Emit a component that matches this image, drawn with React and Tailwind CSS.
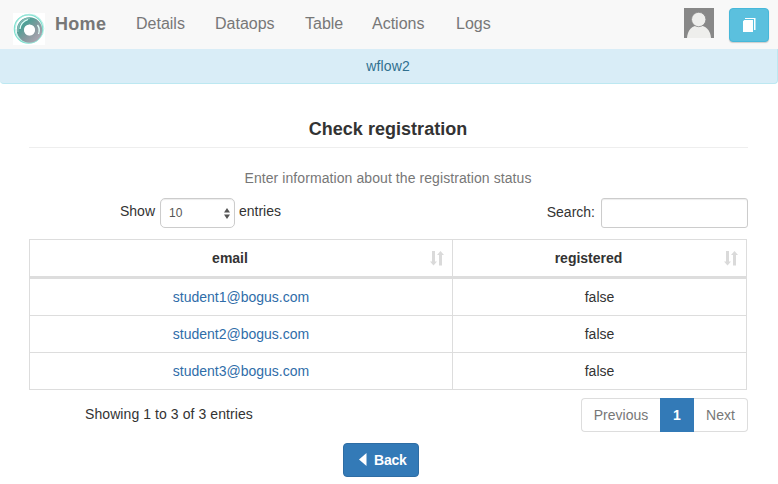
const links = [
  { label: "Details", cls: "w-[79px]" },
  { label: "Dataops", cls: "w-[90px]" },
  { label: "Table", cls: "w-[67px]" },
  { label: "Actions", cls: "w-[84px]" },
  { label: "Logs", cls: "w-[50px]" },
];

const rows = [
  { email: "student1@bogus.com", registered: "false" },
  { email: "student2@bogus.com", registered: "false" },
  { email: "student3@bogus.com", registered: "false" },
];

function Logo() {
  return (
    <svg width="32" height="32" viewBox="0 0 32 32" fill="none">
      <defs>
        <linearGradient id="ring" x1="0" y1="0" x2="1" y2="1">
          <stop offset=".2" stopColor="#4fa096" />
          <stop offset=".6" stopColor="#85999e" />
          <stop offset="1" stopColor="#a9a5b0" />
        </linearGradient>
      </defs>
      <rect width="32" height="32" fill="#fff" />
      <circle cx="15.500" cy="16" r="14.200" stroke="#7fe0cf" strokeWidth="1.200" />
      <circle cx="16.500" cy="15.500" r="14.300" stroke="#a5eadf" strokeWidth=".7" />
      <circle cx="16.500" cy="17" r="9" fill="#fff" stroke="url(#ring)" strokeWidth="7.400" />
      <path d="M5 19C4 12 9 5 17 5.500" stroke="#84b8b3" strokeWidth="1.500" />
      <path d="M7 16c.5-5 3.500-8 8-9.500M25.500 21c1.500-4 .5-7-1-9" stroke="#e2fff9" strokeWidth="1.300" />
      <circle cx="16.500" cy="17" r="5.500" fill="#fff" />
    </svg>
  );
}

function Avatar() {
  return (
    <svg width="30" height="30" viewBox="0 0 30 30">
      <rect width="30" height="30" fill="#888" />
      <path d="M3 30C3.500 22 8 17.500 14.800 17.500S26.500 22 27 30Z" fill="#eeeeec" />
      <circle cx="14.700" cy="11.500" r="7.200" fill="#eeeeec" stroke="#888" strokeWidth=".8" />
    </svg>
  );
}

function SortIcon() {
  return (
    <svg className="shrink-0" width="14" height="15" viewBox="0 0 14 15" fill="#dadada">
      <path d="M2 0h3v10.500h2L3.500 14.500 0 10.500h2z" />
      <path d="M9 14.500h3V4h2L10.500 0 7 4h2z" />
    </svg>
  );
}

function HeadCell({ label, className }) {
  return (
    <div className={"flex items-center pr-[8px] " + className}>
      <span className="flex-1 text-center font-bold">{label}</span>
      <SortIcon />
    </div>
  );
}

export default function App() {
  return (
    <div className="h-[484px] w-[778px] overflow-hidden bg-white font-['Liberation_Sans',Arial,sans-serif] text-[14px] leading-[20px] whitespace-nowrap text-[#333]">
      <nav className="flex h-[49px] items-start bg-[#f8f8f8] pl-[13px] text-[16px] text-[#777]">
        <div className="mt-[13px] w-[42px]"><Logo /></div>
        <a className="mt-[14px] w-[81px] text-[18px] font-bold tracking-[0.3px]">Home</a>
        {links.map((l) => (
          <a key={l.label} className={"mt-[14px] " + l.cls}>{l.label}</a>
        ))}
        <div className="mt-[8px] ml-auto flex pr-[9px]">
          <Avatar />
          <button className="ml-[15px] flex h-[34px] w-[40px] items-center justify-center rounded border border-[#46b8da] bg-[#5bc0de] shadow-[0_1px_1px_#ccc]">
            <svg width="14" height="14" viewBox="0 0 14 14" fill="#fff">
              <path d="M1 3.300 2.300 2H11v12H1z" />
              <path d="M3 0h10.500v12H12V1H3z" />
            </svg>
          </button>
        </div>
      </nav>
      <div className="flex h-[35px] items-center justify-center rounded-b border-r border-b border-[#bce8f1] bg-[#d9edf7] pr-[1px] tracking-[0.15px] text-[#31708f]">wflow2</div>

      <main className="pr-[30px] pl-[29px]">
        <h1 className="flex h-[64px] items-end justify-center border-b border-[#eee] pr-[1px] pb-[8px] text-[18px] font-bold tracking-[0.03px]">Check registration</h1>
        <p className="mt-[20px] pr-[1px] text-center tracking-[0.08px] text-[#777]">Enter information about the registration status</p>
        <div className="mt-[10px] flex h-[30px] justify-between">
          <div className="flex pl-[91px]">
            <span className="mt-[3px] w-[40px]">Show</span>
            <div className="flex h-[30px] w-[75px] items-center justify-between rounded-[5px] border border-[#ccc] pr-[4px] pl-[8px] text-[12px] text-[#555] shadow-[inset_0_1px_1px_rgba(0,0,0,0.075)]">
              <span>10</span>
              <svg width="6" height="11" viewBox="0 0 6 11" fill="#555"><path d="M0 4.500 3 0l3 4.500zM0 6.500h6L3 11z" /></svg>
            </div>
            <span className="mt-[3px] ml-[4px]">entries</span>
          </div>
          <div className="flex">
            <span className="mt-[4px] mr-[6px]">Search:</span>
            <input className="h-[30px] w-[147px] rounded-[3px] border border-[#ccc] shadow-[inset_0_1px_1px_rgba(0,0,0,0.075)]" />
          </div>
        </div>

        <div className="mt-[11px] w-[718px] border border-[#ddd]">
          <div className="flex h-[39px] border-b-3 border-[#ddd]">
            <HeadCell label="email" className="w-[423px] border-r border-[#ddd]" />
            <HeadCell label="registered" className="flex-1" />
          </div>
          {rows.map((r) => (
            <div key={r.email} className="flex h-[37px] border-b border-[#ddd] last:h-[36px] last:border-b-0">
              <div className="flex w-[423px] items-center justify-center border-r border-[#ddd] text-[#2f6da9]">{r.email}</div>
              <div className="flex flex-1 items-center justify-center">{r.registered}</div>
            </div>
          ))}
        </div>

        <div className="mt-[8px] flex h-[34px] justify-between pl-[56px]">
          <span className="mt-[6px] tracking-[0.08px]">Showing 1 to 3 of 3 entries</span>
          <div className="flex text-[#777]">
            <a className="flex w-[79px] items-center justify-center rounded-l border border-r-0 border-[#ddd]">Previous</a>
            <a className="flex w-[34px] items-center justify-center bg-[#337ab7] font-bold text-white">1</a>
            <a className="flex w-[54px] items-center justify-center rounded-r border border-l-0 border-[#ddd]">Next</a>
          </div>
        </div>
      </main>

      <div className="mt-[11px] pl-[343px]">
        <button className="flex h-[34px] w-[76px] items-center gap-[7px] rounded border border-[#2e6da4] bg-[#337ab7] pl-[15px] font-bold tracking-[-0.2px] text-white">
          <svg width="8" height="13" viewBox="0 0 8 13" fill="#fff" className="-mt-[2px]"><path d="M7.500 0v13L0 6.500z" /></svg>
          Back
        </button>
      </div>
    </div>
  );
}
